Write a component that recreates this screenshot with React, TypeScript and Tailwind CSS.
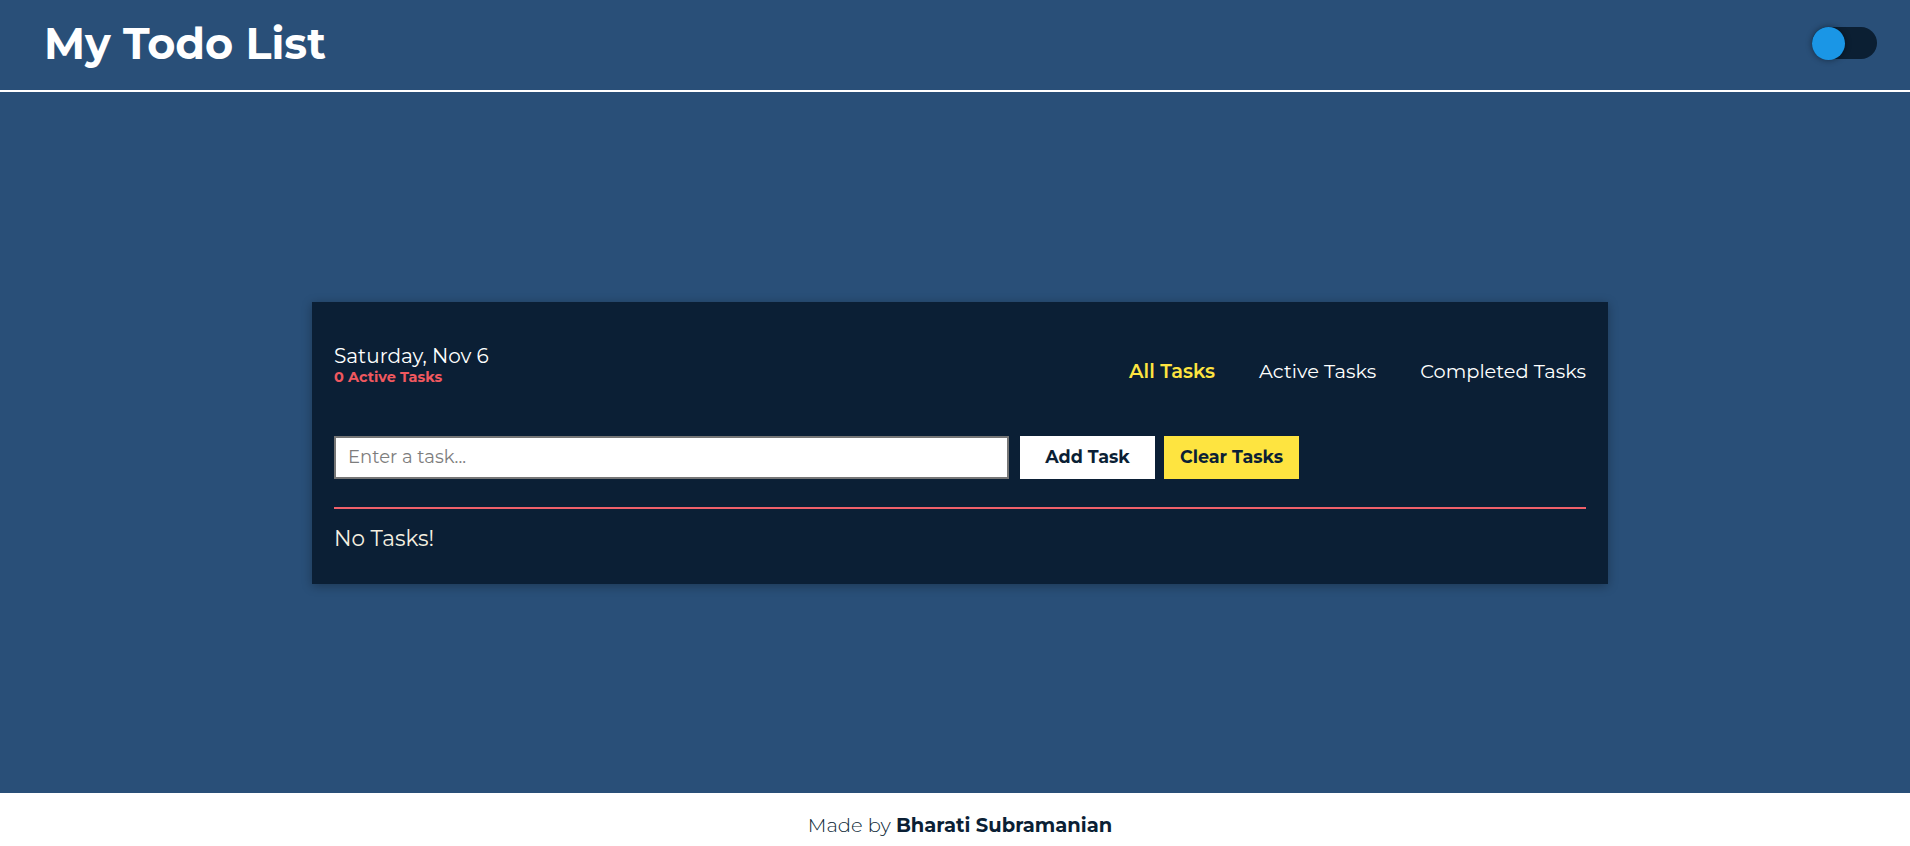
import React, { useState } from 'react';

type Filter = 'all' | 'active' | 'completed';

const filters: { key: Filter; label: string }[] = [
  { key: 'all', label: 'All Tasks' },
  { key: 'active', label: 'Active Tasks' },
  { key: 'completed', label: 'Completed Tasks' },
];

export default function App() {
  const [filter, setFilter] = useState<Filter>('all');
  const [task, setTask] = useState('');
  const [dark, setDark] = useState(true);

  return (
    <div className="min-h-screen flex flex-col bg-[#294f78] font-['Montserrat','Open_Sans',sans-serif]">
      {/* Header */}
      <header className="h-[92px] flex items-center justify-between pl-[44px] pr-[33px] border-b-2 border-white">
        <h1 className="text-[43px] font-bold text-white leading-none -mt-[4px]">My Todo List</h1>
        <button
          onClick={() => setDark(!dark)}
          className="relative w-[65px] h-[32px] rounded-full bg-[#0b1f33] -mt-[4px]"
        >
          <span className="absolute left-0 top-[-0.5px] w-[33px] h-[33px] rounded-full bg-[#1a96e6] shadow-[0_0_6px_rgba(0,0,0,0.45)]" />
        </button>
      </header>

      {/* Main */}
      <main className="flex-1 flex items-center justify-center pl-[10px]">
        <div className="w-[1296px] bg-[#0b1f35] shadow-[0_2px_10px_rgba(0,0,0,0.3)] px-[22px] pt-[42px] pb-[33px]">
          <div className="flex items-end justify-between">
            <div className="flex flex-col">
              <span className="text-[20px] leading-[24px] text-white">Saturday, Nov 6</span>
              <span className="text-[14.5px] leading-[18px] font-bold text-[#f0585f]">0 Active Tasks</span>
            </div>
            <nav className="flex gap-[44px] mb-[4px]">
              {filters.map((f) => (
                <button
                  key={f.key}
                  onClick={() => setFilter(f.key)}
                  className={
                    filter === f.key
                      ? 'text-[19.4px] leading-[22px] font-semibold text-[#fee440]'
                      : 'text-[19.4px] leading-[22px] text-white'
                  }
                >
                  {f.label}
                </button>
              ))}
            </nav>
          </div>

          <div className="flex items-center mt-[50px]">
            <input
              value={task}
              onChange={(e) => setTask(e.target.value)}
              placeholder="Enter a task..."
              className="w-[675px] h-[43px] bg-white border-2 border-[#767676] px-[12px] text-[18px] text-black placeholder:text-[#7d7d7d] outline-none"
            />
            <button className="ml-[11px] w-[135px] h-[43px] bg-white text-[#0b1f35] text-[17.5px] font-bold">
              Add Task
            </button>
            <button
              onClick={() => setTask('')}
              className="ml-[9px] w-[135px] h-[43px] bg-[#fee440] text-[#0b1f35] text-[17.5px] font-bold"
            >
              Clear Tasks
            </button>
          </div>

          <div className="mt-[28px] h-[2px] bg-[#f0606a]" />

          <p className="mt-[16px] text-[21.5px] leading-[26px] text-[#f5f0e1]">No Tasks!</p>
        </div>
      </main>

      {/* Footer */}
      <footer className="h-[53px] bg-white flex items-center justify-center pt-[12px] pl-[10px]">
        <p className="text-[19.5px] text-[#0b1f35] font-light">
          Made by <span className="font-bold">Bharati Subramanian</span>
        </p>
      </footer>
    </div>
  );
}
